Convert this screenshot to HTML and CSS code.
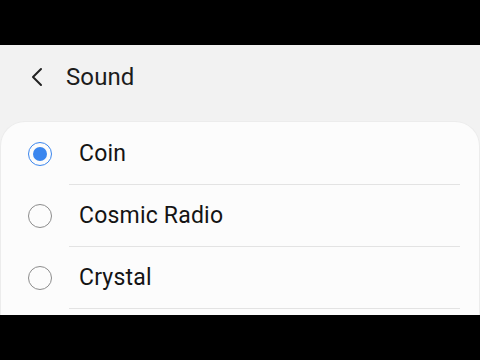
FILE: index.html
```html
<!DOCTYPE html>
<html>
<head>
<meta charset="utf-8">
<link rel="stylesheet" href="styles.css">
</head>
<body>
<div class="screen">
  <div class="bar"></div>
  <div class="app">
    <div class="header">
      <svg class="back" width="14" height="20" viewBox="0 0 14 20"><path d="M11 2 L3 10 L11 18" fill="none" stroke="#222" stroke-width="2" stroke-linecap="round" stroke-linejoin="round"/></svg>
      <span class="title">Sound</span>
    </div>
    <div class="card">
      <div class="row">
        <span class="radio checked"></span>
        <span class="label">Coin</span>
      </div>
      <div class="row">
        <span class="radio"></span>
        <span class="label">Cosmic Radio</span>
      </div>
      <div class="row">
        <span class="radio"></span>
        <span class="label">Crystal</span>
      </div>
    </div>
  </div>
  <div class="bar"></div>
</div>
</body>
</html>
```
FILE: styles.css
```css
html, body {
  margin: 0;
  padding: 0;
  background: #000;
}
.screen {
  width: 480px;
  height: 360px;
  display: flex;
  flex-direction: column;
  font-family: Roboto, "Liberation Sans", sans-serif;
}
.bar {
  height: 45px;
  background: #000;
  flex: none;
}
.app {
  height: 270px;
  background: #f2f2f2;
  overflow: hidden;
  flex: none;
}
.header {
  height: 77px;
  box-sizing: border-box;
  padding: 18px 0 0 30px;
  display: flex;
  align-items: flex-start;
}
.back {
  margin-top: 4px;
  flex: none;
}
.title {
  margin-left: 22px;
  font-size: 24px;
  line-height: 28px;
  color: #1c1c1c;
  letter-spacing: 0.1px;
}
.card {
  background: #fcfcfc;
  border-radius: 24px 24px 0 0;
  margin: 0 1px;
  padding-top: 1px;
  box-shadow: 0 0 0 1px #ececec;
  height: 300px;
}
.row {
  height: 62px;
  display: flex;
  align-items: stretch;
}
.radio {
  flex: none;
  width: 24px;
  height: 24px;
  box-sizing: border-box;
  border: 1.5px solid #8c8c8c;
  border-radius: 50%;
  margin: 19px 17px 0 27px;
  position: relative;
}
.radio.checked {
  border-color: #3b86ee;
}
.radio.checked::after {
  content: "";
  position: absolute;
  left: 3.5px;
  top: 3.5px;
  width: 14px;
  height: 14px;
  border-radius: 50%;
  background: #3b86ee;
}
.label {
  flex: 1;
  display: flex;
  align-items: center;
  padding-left: 10px;
  margin-right: 19px;
  border-bottom: 1.5px solid #e3e3e3;
  font-size: 23px;
  letter-spacing: 0.2px;
  color: #141414;
}
```
